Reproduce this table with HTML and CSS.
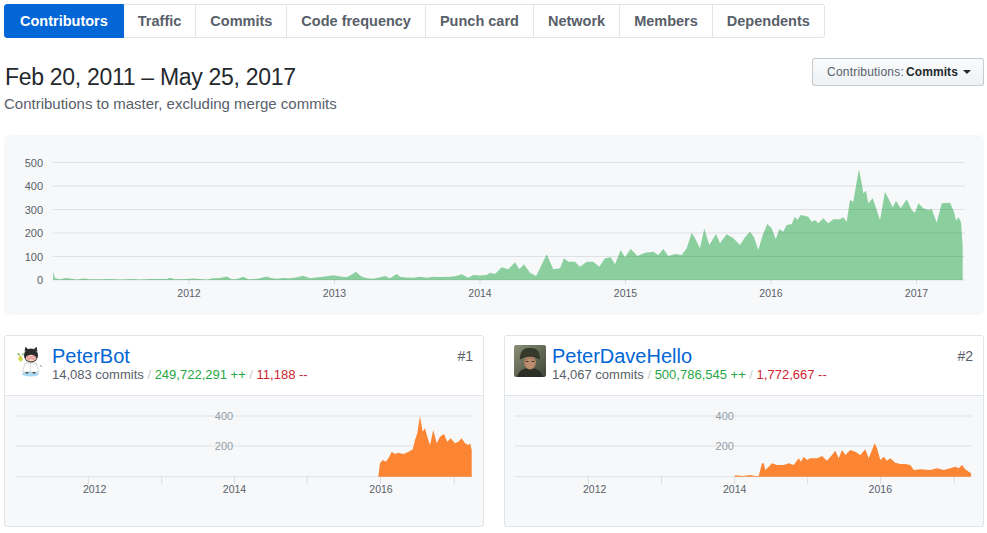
FILE: index.html
```html
<!DOCTYPE html>
<html>
<head>
<meta charset="utf-8">
<link rel="stylesheet" href="styles.css">
</head>
<body>
<div class="page">
  <nav class="tabs">
    <a class="tab selected">Contributors</a>
    <a class="tab">Traffic</a>
    <a class="tab">Commits</a>
    <a class="tab">Code frequency</a>
    <a class="tab">Punch card</a>
    <a class="tab">Network</a>
    <a class="tab">Members</a>
    <a class="tab last">Dependents</a>
  </nav>

  <div class="head">
    <div class="head-text">
      <h2 class="range">Feb 20, 2011 – May 25, 2017</h2>
      <p class="sub">Contributions to master, excluding merge commits</p>
    </div>
    <button class="select-btn"><span class="muted">Contributions:</span> <b>Commits</b><span class="caret"></span></button>
  </div>

  <div class="overview">
    <svg class="overview-svg" width="980" height="180" viewBox="4 135 980 180">
      <path class="area-green" d="M53,280 L53.3,271.7 L55,278.3 L60,279.3 L66,278 L71.7,278.7 L77,279.5 L83.3,278.5 L90,279.3 L100,279.3 L110,279 L120,279.5 L133,279 L140,279.5 L150,279 L166.7,279 L170,277.8 L175,279.3 L186.7,279 L193,278.5 L200,279 L207,279.5 L213.3,278.3 L220,278 L226.7,276.5 L231.7,279.3 L237,279 L243.3,276.8 L248.3,279.3 L255,279 L260,278.3 L266.7,276.5 L271,278 L276.7,278.7 L283,278 L290,278.3 L296,277.5 L303.3,275.7 L310,278.3 L316,277.5 L323.3,276.7 L328,276 L333.3,275.3 L340,276.5 L346.7,277.3 L351,275 L356,271.7 L360,275.5 L363.3,277.3 L368,278.3 L373.3,278.7 L379,277.5 L385,276 L390,278.3 L396.7,274 L400,276.7 L406,277.5 L413.3,277.7 L420,276.7 L426.7,277.7 L433.3,276.7 L440,277 L450,276.7 L456,276 L461.7,274.3 L468.3,277.7 L473.3,275 L480,275.5 L486.7,275 L490,272.7 L495,274 L501.7,267.3 L508.3,269.3 L515,262.3 L519.3,269.3 L524,264.3 L530,272.7 L536,276 L540,268.3 L546.7,254.3 L553.3,269.3 L560,268.3 L564,258.3 L568.3,261.7 L575,261.7 L580,266.7 L586.7,261.7 L593.3,261.7 L599.3,266.7 L605,258.3 L610.7,257.3 L615,264.3 L620.7,250 L625,257.3 L630.7,248.7 L637.3,256 L645,252.7 L653.3,251.7 L658.3,255 L663.3,249 L668.3,256 L675,254 L681.7,255 L686.7,248.3 L691.7,232.7 L695,238.3 L700,248.3 L704.3,228.7 L709.3,245 L716,234 L720,243.3 L726.7,234.3 L733.3,238.3 L740,245 L745,237.3 L750,231.7 L754,237.3 L758.3,250 L762.7,235 L767.3,224 L771.7,228.3 L775.7,239.3 L779.3,229.3 L783.3,231.7 L786.7,225 L791.7,224 L795,216.7 L797.3,220 L800.7,215 L805,216 L808.3,216.7 L811.7,221.7 L815,220 L818.3,223.3 L823.3,218.3 L828.3,223.3 L833.3,219.3 L840,219.3 L843.3,217.3 L846.7,221.7 L850,200 L853.3,201.7 L856.7,181.7 L859,169.3 L861.7,183.3 L863.3,193.3 L866,190.7 L868.3,203.3 L872.7,198.3 L876.7,210 L880,220 L885,191.7 L888.3,198.3 L892.7,207.3 L896,200.7 L900.7,208.3 L906.7,199.3 L911.7,210 L915,212.7 L918.3,203.3 L923.3,208.3 L928.3,210 L931.7,209 L936.7,222.7 L941.7,203.3 L950,202.7 L954,211.7 L956,220.7 L958.3,217.3 L961,221.7 L962.7,246.7 L962.7,280 Z"/>
      <g class="grid">
        <line x1="53" y1="162.5" x2="965" y2="162.5"/>
        <line x1="53" y1="186" x2="965" y2="186"/>
        <line x1="53" y1="209.5" x2="965" y2="209.5"/>
        <line x1="53" y1="233" x2="965" y2="233"/>
        <line x1="53" y1="256.5" x2="965" y2="256.5"/>
        <line x1="53" y1="280" x2="965" y2="280"/>
      </g>
      <g class="ticks">
        <line x1="189" y1="280" x2="189" y2="284"/>
        <line x1="334.5" y1="280" x2="334.5" y2="284"/>
        <line x1="480" y1="280" x2="480" y2="284"/>
        <line x1="625.5" y1="280" x2="625.5" y2="284"/>
        <line x1="771" y1="280" x2="771" y2="284"/>
        <line x1="916.5" y1="280" x2="916.5" y2="284"/>
      </g>
      <g class="ylab">
        <text x="43" y="166.5">500</text>
        <text x="43" y="190">400</text>
        <text x="43" y="213.5">300</text>
        <text x="43" y="237">200</text>
        <text x="43" y="260.5">100</text>
        <text x="43" y="284">0</text>
      </g>
      <g class="xlab">
        <text x="189" y="296.5">2012</text>
        <text x="334.5" y="296.5">2013</text>
        <text x="480" y="296.5">2014</text>
        <text x="625.5" y="296.5">2015</text>
        <text x="771" y="296.5">2016</text>
        <text x="916.5" y="296.5">2017</text>
      </g>
    </svg>
  </div>

  <div class="cards">
    <div class="card">
      <div class="card-head">
        <svg class="avatar" width="32" height="32" viewBox="0 0 32 32">
          <ellipse cx="16.5" cy="29" rx="8.5" ry="2.4" fill="#a9d8f2"/>
          <path d="M11,27 L13,29 L15,27 Z" fill="#2b2b2b"/>
          <path d="M18,27 L20,29 L22,27 Z" fill="#2b2b2b"/>
          <path d="M11,18 L22,18 L25,27 L8.5,27 Z" fill="#fff" stroke="#b9bfc6" stroke-width="0.6"/>
          <path d="M16.5,18 L16.5,27" stroke="#c9ced4" stroke-width="0.6"/>
          <path d="M10.5,6.5 L11.5,1.8 L14.5,4.5 Z" fill="#2b2b2b"/>
          <path d="M19.5,4.5 L22.5,1.8 L23.5,6.5 Z" fill="#2b2b2b"/>
          <circle cx="17" cy="10.5" r="7" fill="#2b2b2b"/>
          <ellipse cx="17" cy="13.2" rx="5.2" ry="3.4" fill="#f1cbb5"/>
          <circle cx="14.8" cy="12.6" r="1.6" fill="none" stroke="#e4758f" stroke-width="0.8"/>
          <circle cx="19.2" cy="12.6" r="1.6" fill="none" stroke="#e4758f" stroke-width="0.8"/>
          <path d="M4,13 L7,10 L9,15 L6,17 Z" fill="#cfd94a"/>
          <path d="M3,9 L5,8 L6,11 Z" fill="#6aa84f"/>
          <path d="M8,9 L10,8 L9,11 Z" fill="#6aa84f"/>
          <path d="M26,20 L28,22" stroke="#6a737d" stroke-width="0.8"/>
        </svg>
        <div class="who">
          <a class="name">PeterBot</a>
          <div class="stats"><span class="cmt">14,083 commits</span> <span class="sep">/</span> <span class="add">249,722,291 ++</span> <span class="sep">/</span> <span class="del">11,188 --</span></div>
        </div>
        <span class="rank">#1</span>
      </div>
      <svg class="mini" width="478" height="130" viewBox="5 396 478 130">
        <g class="grid">
          <line x1="15" y1="416" x2="472.7" y2="416"/>
          <line x1="15" y1="446" x2="472.7" y2="446"/>
          <line x1="15" y1="476.7" x2="472.7" y2="476.7"/>
        </g>
        <text class="mlab" x="224" y="420">400</text>
        <text class="mlab" x="224" y="450">200</text>
        <path class="area-orange" d="M378.3,476.7 L380,463.3 L382.7,460 L386,461.7 L389.3,456.7 L391.7,451.7 L395,454 L398.3,452.7 L403.3,454 L408.3,452 L412.7,449.3 L415,440 L417.3,433.3 L420,416 L422.7,431.7 L425,428.3 L427.3,436.7 L430,445 L433.3,430 L436.7,443.3 L440,436.7 L444,434 L447.3,441.7 L450.7,438.3 L455,443.3 L458.3,441.7 L461.7,438.3 L465,443.3 L468.3,445 L470,443.3 L471.7,450 L471.7,476.7 Z"/>
        <g class="ticks">
          <line x1="88.3" y1="476.7" x2="88.3" y2="484"/>
          <line x1="161.7" y1="476.7" x2="161.7" y2="484"/>
          <line x1="234.5" y1="476.7" x2="234.5" y2="484"/>
          <line x1="307.3" y1="476.7" x2="307.3" y2="484"/>
          <line x1="380.5" y1="476.7" x2="380.5" y2="484"/>
          <line x1="454.3" y1="476.7" x2="454.3" y2="484"/>
        </g>
        <g class="xlab">
          <text x="94.7" y="493">2012</text>
          <text x="234.5" y="493">2014</text>
          <text x="381" y="493">2016</text>
        </g>
      </svg>
    </div>

    <div class="card">
      <div class="card-head">
        <svg class="avatar" width="32" height="32" viewBox="0 0 32 32">
          <defs>
            <linearGradient id="bgp" x1="0" y1="0" x2="1" y2="1">
              <stop offset="0" stop-color="#8a8f78"/>
              <stop offset="1" stop-color="#3f4436"/>
            </linearGradient>
          </defs>
          <rect x="0" y="0" width="32" height="32" rx="2" fill="url(#bgp)"/>
          <path d="M3,32 C5,25 10,23 16,23 C22,23 27,25 29,32 Z" fill="#2c2f25"/>
          <ellipse cx="16" cy="17.5" rx="6" ry="7" fill="#a97e60"/>
          <ellipse cx="16" cy="19" rx="4.5" ry="5" fill="#bb8f70"/>
          <path d="M6,14 C6,5 10,3 16,3 C22,3 26,5 26,14 C23,12 20,11 16,11 C12,11 9,12 6,14 Z" fill="#353a2b"/>
          <path d="M6,14 C9,12 12,11 16,11 C20,11 23,12 26,14" fill="none" stroke="#23261d" stroke-width="1"/>
          <path d="M12,16.5 L14.5,16.5 M17.5,16.5 L20,16.5" stroke="#3a2a20" stroke-width="0.9"/>
        </svg>
        <div class="who">
          <a class="name">PeterDaveHello</a>
          <div class="stats"><span class="cmt">14,067 commits</span> <span class="sep">/</span> <span class="add">500,786,545 ++</span> <span class="sep">/</span> <span class="del">1,772,667 --</span></div>
        </div>
        <span class="rank">#2</span>
      </div>
      <svg class="mini" width="478" height="130" viewBox="505 396 478 130">
        <g class="grid">
          <line x1="515" y1="416" x2="972" y2="416"/>
          <line x1="515" y1="446" x2="972" y2="446"/>
          <line x1="515" y1="476.7" x2="972" y2="476.7"/>
        </g>
        <text class="mlab" x="724.7" y="420">400</text>
        <text class="mlab" x="724.7" y="450">200</text>
        <path class="area-orange" d="M734.3,476.7 L735.3,475.3 L743.7,476 L750.3,475 L755.3,476 L758.7,476 L762,463.3 L763.7,463.3 L765.3,470 L768.7,466.7 L772,463.3 L777,465 L783.7,465 L788.7,463.3 L793.7,465 L798.7,458.3 L801,461.7 L803.7,456.7 L807,460 L810.3,458.3 L817,458.3 L822,456 L827,460.7 L832,455 L835.3,450.7 L838.7,458.3 L842,450 L845.3,455 L850.3,450 L855.3,451.7 L860.3,455 L865.3,449.3 L868.7,458.3 L872,450 L874.7,443.3 L877,448.3 L880.3,460 L883.7,456.7 L887,460.7 L890.3,458.3 L895.3,462.7 L900.3,464 L905.3,464 L910.3,465 L913.7,470 L920.3,469.3 L930.3,470 L937,468.3 L943.7,470 L950.3,468.3 L955.3,466.7 L958.7,468.3 L962,465 L965.3,469.3 L968.7,471.7 L971,473 L971,476.7 Z"/>
        <g class="ticks">
          <line x1="588.3" y1="476.7" x2="588.3" y2="484"/>
          <line x1="661.5" y1="476.7" x2="661.5" y2="484"/>
          <line x1="734.7" y1="476.7" x2="734.7" y2="484"/>
          <line x1="807.7" y1="476.7" x2="807.7" y2="484"/>
          <line x1="880.7" y1="476.7" x2="880.7" y2="484"/>
          <line x1="954.3" y1="476.7" x2="954.3" y2="484"/>
        </g>
        <g class="xlab">
          <text x="594.7" y="493">2012</text>
          <text x="734.7" y="493">2014</text>
          <text x="880.3" y="493">2016</text>
        </g>
      </svg>
    </div>
  </div>
</div>
</body>
</html>
```

FILE: styles.css
```css
* { box-sizing: border-box; }

html, body {
  margin: 0;
  padding: 0;
  background: #fff;
}

body {
  font-family: "Liberation Sans", Arial, sans-serif;
  color: #24292e;
}

.page {
  width: 980px;
  margin-left: 4px;
  padding-top: 4px;
}

/* Tabs */
.tabs {
  display: flex;
}

.tab {
  display: block;
  padding: 0 14px;
  line-height: 32px;
  font-size: 14.5px;
  font-weight: bold;
  color: #586069;
  border: 1px solid #e1e4e8;
  border-left: none;
  background: #fff;
  white-space: nowrap;
}

.tab.selected {
  background: #0366d6;
  border-color: #0366d6;
  color: #fff;
  border-radius: 3px 0 0 3px;
  border-left: 1px solid #0366d6;
  padding: 0 15px;
}

.tab.last {
  border-radius: 0 3px 3px 0;
}

/* Header */
.head {
  display: flex;
  justify-content: space-between;
  align-items: flex-start;
  margin-top: 20px;
}

.range {
  margin: 4px 0 0 1px;
  font-size: 23px;
  line-height: 30px;
  font-weight: normal;
  letter-spacing: -0.3px;
  color: #24292e;
}

.sub {
  margin: 2px 0 0 0;
  font-size: 15px;
  line-height: 20px;
  color: #586069;
}

.select-btn {
  display: flex;
  align-items: center;
  height: 28px;
  padding: 0 12px 0 14px;
  font-family: "Liberation Sans", Arial, sans-serif;
  font-size: 12px;
  color: #24292e;
  background: linear-gradient(#fafbfc, #eff3f6 90%);
  border: 1px solid rgba(27, 31, 35, 0.2);
  border-radius: 3px;
  white-space: pre;
}

.select-btn .muted {
  color: #586069;
  letter-spacing: 0.2px;
}

.select-btn b {
  margin-left: 2px;
  letter-spacing: 0.1px;
}

.caret {
  display: inline-block;
  width: 0;
  height: 0;
  margin-left: 5px;
  border-top: 4px solid #24292e;
  border-left: 4px solid transparent;
  border-right: 4px solid transparent;
}

/* Overview chart */
.overview {
  margin-top: 21px;
  height: 180px;
  background: #f6f8fa;
  border-radius: 6px;
  overflow: hidden;
}

.overview-svg {
  display: block;
}

.area-green {
  fill: #8ccf9e;
}

.area-orange {
  fill: #fb8532;
}

.grid line {
  stroke: rgba(27, 31, 35, 0.1);
  stroke-width: 1;
}

.ticks line {
  stroke: rgba(27, 31, 35, 0.12);
  stroke-width: 1;
}

.ylab text {
  font-family: "Liberation Sans", Arial, sans-serif;
  font-size: 11px;
  fill: #586069;
  text-anchor: end;
}

.xlab text {
  font-family: "Liberation Sans", Arial, sans-serif;
  font-size: 10.5px;
  fill: #586069;
  text-anchor: middle;
}

/* Cards */
.cards {
  display: grid;
  grid-template-columns: 480px 480px;
  column-gap: 20px;
  margin-top: 20px;
}

.card {
  border: 1px solid #e1e4e8;
  border-radius: 3px;
  background: #f6f8fa;
  overflow: hidden;
}

.card-head {
  display: flex;
  align-items: flex-start;
  height: 60px;
  padding: 9px 10px 0 9px;
  background: #fff;
  border-bottom: 1px solid #e1e4e8;
}

.avatar {
  display: block;
  flex: none;
  width: 32px;
  height: 32px;
}

.who {
  flex: 1;
  margin-left: 6px;
}

.name {
  display: block;
  font-size: 20px;
  line-height: 22px;
  color: #0366d6;
}

.stats {
  font-size: 13px;
  line-height: 16px;
  white-space: pre;
}

.stats .cmt { color: #586069; }
.stats .sep { color: #c6cbd1; }
.stats .add { color: #28a745; }
.stats .del { color: #cb2431; }

.rank {
  font-size: 14px;
  line-height: 22px;
  color: #586069;
}

.mini {
  display: block;
}

.mlab {
  font-family: "Liberation Sans", Arial, sans-serif;
  font-size: 11px;
  fill: #959da5;
  text-anchor: middle;
}
```
